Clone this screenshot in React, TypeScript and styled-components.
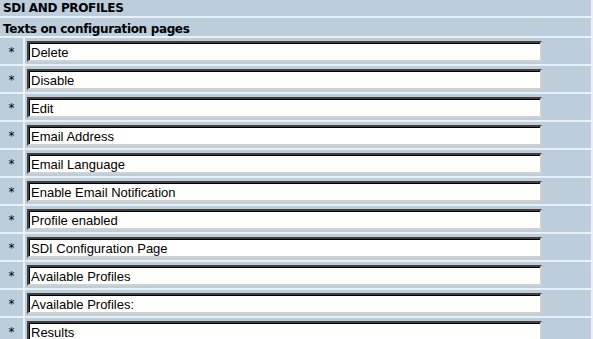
import React from "react";
import styled, { createGlobalStyle } from "styled-components";

const Global = createGlobalStyle`
  html, body { margin: 0; padding: 0; background: #e8f0f8; }
  body { width: 593px; height: 339px; overflow: hidden; }
`;

const Frame = styled.div`
  width: 591px;
  padding-right: 2px;
  display: flex;
  flex-direction: column;
  gap: 2px;
  background: #e8f0f8;
`;

const HeadCell = styled.div<{ $h: number; $top: number }>`
  height: ${(p) => p.$h}px;
  box-sizing: border-box;
  padding: ${(p) => p.$top}px 0 0 3px;
  background: #bccddc;
  color: #000;
  font-family: "DejaVu Sans", Verdana, sans-serif;
  font-weight: bold;
  font-size: 12px;
  letter-spacing: -0.35px;
  line-height: 13px;
  white-space: nowrap;
`;

const Row = styled.div`
  display: grid;
  grid-template-columns: 23px 1fr;
  gap: 2px;
  height: 26px;
`;

const StarCell = styled.div`
  background: #bccddc;
  font-family: "DejaVu Sans", Verdana, sans-serif;
  font-size: 12px;
  text-align: center;
  padding-top: 7px;
  box-sizing: border-box;
`;

const FieldCell = styled.div`
  background: #bccddc;
  padding: 3px 0 0 2px;
  box-sizing: border-box;
`;

const Field = styled.input`
  display: block;
  box-sizing: border-box;
  width: 515px;
  height: 21px;
  margin: 0;
  padding: 2px 2px 0;
  background: #fff;
  border-style: solid;
  border-width: 2px;
  border-color: #404040 #d4d0c8 #d4d0c8 #404040;
  box-shadow: inset 1px 1px 0 #000;
  font-family: Arial, "Liberation Sans", sans-serif;
  font-size: 13px;
  color: #000;
  outline: none;
`;

const labels = [
  "Delete",
  "Disable",
  "Edit",
  "Email Address",
  "Email Language",
  "Enable Email Notification",
  "Profile enabled",
  "SDI Configuration Page",
  "Available Profiles",
  "Available Profiles:",
  "Results",
];

export default function App() {
  return (
    <>
      <Global />
      <Frame>
        <HeadCell $h={16} $top={2}>SDI AND PROFILES</HeadCell>
        <HeadCell $h={18} $top={5}>Texts on configuration pages</HeadCell>
        {labels.map((l) => (
          <Row key={l}>
            <StarCell>*</StarCell>
            <FieldCell>
              <Field defaultValue={l} readOnly />
            </FieldCell>
          </Row>
        ))}
      </Frame>
    </>
  );
}
